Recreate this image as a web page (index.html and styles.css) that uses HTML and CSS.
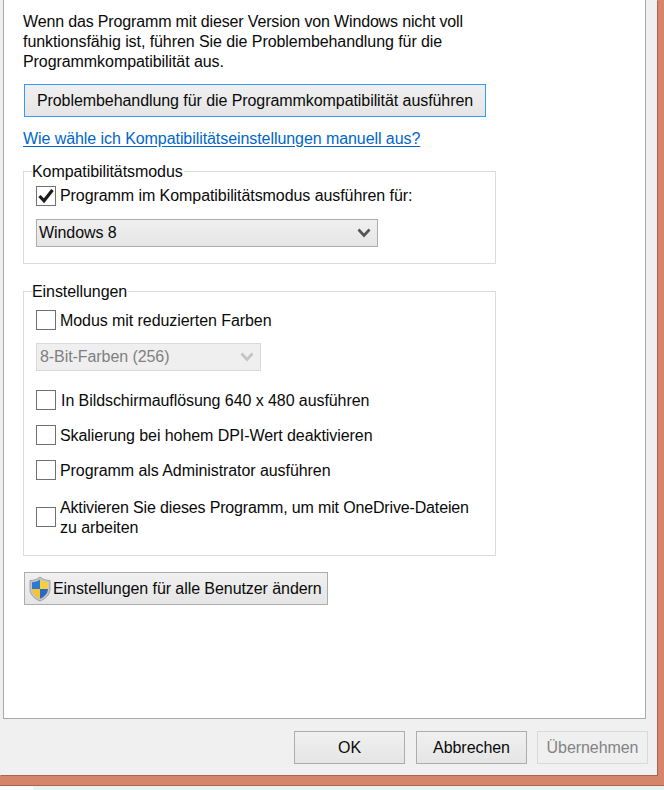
FILE: index.html
```html
<!DOCTYPE html>
<html lang="de">
<head>
<meta charset="utf-8">
<title>Kompatibilität</title>
<link rel="stylesheet" href="styles.css">
</head>
<body>
<div class="frame">
  <div class="dialog">
    <main class="panel">
      <p class="intro"><span class="tight">Wenn das Programm mit dieser Version von Windows nicht voll</span> funktionsfähig ist, führen Sie die Problembehandlung für die Programmkompatibilität aus.</p>
      <button class="btn btn-focus">Problembehandlung für die Programmkompatibilität ausführen</button>
      <a class="link" href="#">Wie wähle ich Kompatibilitätseinstellungen manuell aus?</a>

      <section class="group group-mode">
        <h2 class="legend">Kompatibilitätsmodus</h2>
        <div class="row row-mode">
          <span class="check">
            <svg class="tick" width="18" height="18" viewBox="0 0 18 18"><path d="M2.500 9 L7 13.800 L15.500 3" fill="none" stroke="#1a1a1a" stroke-width="3.200"/></svg>
          </span>
          <span>Programm im Kompatibilitätsmodus ausführen für:</span>
        </div>
        <div class="select select-mode">
          <span>Windows 8</span>
          <svg width="14" height="10" viewBox="0 0 14 10"><path d="M1.500 1.500 L7 7.500 L12.500 1.500" fill="none" stroke="#555" stroke-width="2.600"/></svg>
        </div>
      </section>

      <section class="group group-settings">
        <h2 class="legend">Einstellungen</h2>
        <div class="row row-colors"><span class="check"></span><span class="label">Modus mit reduzierten Farben</span></div>
        <div class="select select-off">
          <span>8-Bit-Farben (256)</span>
          <svg width="14" height="10" viewBox="0 0 14 10"><path d="M1.500 1.500 L7 7.500 L12.500 1.500" fill="none" stroke="#c4c4c4" stroke-width="2.600"/></svg>
        </div>
        <div class="row row-res"><span class="check"></span><span class="label label-res">In Bildschirmauflösung 640 x 480 ausführen</span></div>
        <div class="row row-next"><span class="check"></span><span class="label">Skalierung bei hohem DPI-Wert deaktivieren</span></div>
        <div class="row row-next"><span class="check"></span><span class="label">Programm als Administrator ausführen</span></div>
        <div class="row row-drive"><span class="check"></span><span class="label wrap"><span class="tight">Aktivieren Sie dieses Programm, um mit OneDrive-Dateien</span> zu arbeiten</span></div>
      </section>

      <button class="btn btn-shield">
        <svg width="24" height="26" viewBox="0 0 24 26">
          <path d="M12 1 C9 3.500 5.500 4.500 2 4.500 L2 13 C2 19 7 23 12 25 C17 23 22 19 22 13 L22 4.500 C18.500 4.500 15 3.500 12 1 Z" fill="#c3c6ca" stroke="#8f9499" stroke-width="0.800"/>
          <path d="M12 3.500 L12 13 L4 13 L4 6.300 C7 6.200 9.500 5.300 12 3.500 Z" fill="#2f78d6"/>
          <path d="M12 3.500 C14.500 5.300 17 6.200 20 6.300 L20 13 L12 13 Z" fill="#f7cf3c"/>
          <path d="M4 13 L12 13 L12 22.800 C8 21 4.300 18 4 13 Z" fill="#f5c52e"/>
          <path d="M12 13 L20 13 C19.700 18 16 21 12 22.800 Z" fill="#2a68c4"/>
        </svg>
        <span>Einstellungen für alle Benutzer ändern</span>
      </button>
    </main>
    <footer class="footer">
      <button class="btn btn-foot">OK</button>
      <button class="btn btn-foot btn-cancel">Abbrechen</button>
      <button class="btn btn-foot btn-off">Übernehmen</button>
    </footer>
  </div>
</div>
<div class="below"><span class="below-left"></span></div>
</body>
</html>
```
FILE: styles.css
```css
html, body {
  margin: 0;
  padding: 0;
}
body {
  width: 664px;
  height: 790px;
  overflow: hidden;
  background: #eef0ee;
  font-family: "Liberation Sans", Arial, sans-serif;
  font-size: 16px;
  line-height: 20px;
  letter-spacing: -0.07px;
  color: #0a0a0a;
}
.tight {
  letter-spacing: -0.15px;
}
.frame {
  height: 786px;
  box-sizing: border-box;
  background: #d4856a;
  border-bottom: 1px solid #a9654f;
}
.dialog {
  width: 657px;
  height: 775px;
  box-sizing: border-box;
  background: #f0f0f0;
  padding-left: 3px;
  box-shadow: 1px 1px 0 #a9654f;
  display: flex;
  flex-direction: column;
}
.panel {
  width: 643px;
  height: 719px;
  box-sizing: border-box;
  background: #fff;
  border: 1px solid #a9a9a9;
  border-top: 0;
  padding: 12px 0 0 19px;
}
.intro {
  margin: 0;
  width: 450px;
}
.btn {
  display: flex;
  align-items: center;
  justify-content: center;
  box-sizing: border-box;
  height: 33px;
  padding: 0;
  font: inherit;
  letter-spacing: inherit;
  color: inherit;
  border: 1px solid #acacac;
  background: linear-gradient(#f0f0f0, #e5e5e5);
}
.btn-focus {
  margin: 12px 0 0 1px;
  width: 462px;
  border-color: #3399ff;
}
.link {
  display: block;
  width: max-content;
  margin-top: 12px;
  color: #0066cc;
  text-decoration: underline;
  text-underline-offset: 2px;
}
.group {
  position: relative;
  box-sizing: border-box;
  width: 473px;
  border: 1px solid #dcdcdc;
  padding-left: 12px;
}
.group-mode {
  margin-top: 22px;
  height: 93px;
}
.group-settings {
  margin-top: 27px;
  height: 265px;
}
.legend {
  position: absolute;
  left: 8px;
  top: -10px;
  margin: 0;
  padding: 0 1px 0 0;
  font: inherit;
  background: #fff;
}
.row {
  display: flex;
  align-items: center;
  gap: 4px;
}
.label {
  margin: 1px 0 -1px;
}
.label-res {
  margin-left: 1px;
}
.check {
  flex: none;
  display: flex;
  align-items: center;
  justify-content: center;
  box-sizing: border-box;
  width: 20px;
  height: 20px;
  border: 1px solid #707070;
  background: #fff;
}
.row-mode { margin-top: 14px; }
.row-colors { margin-top: 18px; }
.row-res { margin-top: 19px; }
.row-next { margin-top: 15px; }
.row-drive { margin-top: 17px; }
.wrap { width: 425px; }
.select {
  display: flex;
  align-items: center;
  justify-content: space-between;
  box-sizing: border-box;
  height: 28px;
  padding: 0 6px 0 2px;
  border: 1px solid #acacac;
}
.select-mode {
  margin-top: 13px;
  width: 342px;
  background: linear-gradient(#f0f0f0, #e5e5e5);
}
.select-off {
  margin-top: 13px;
  width: 225px;
  padding-left: 3px;
  color: #7f7f7f;
  background: #efefef;
  border-color: #d9d9d9;
}
.btn-shield {
  margin: 16px 0 0 1px;
  width: 304px;
  justify-content: flex-start;
  gap: 0;
  padding-left: 3px;
}
.btn-shield svg {
  flex: none;
  margin-right: 1px;
}
.footer {
  display: flex;
  justify-content: flex-end;
  gap: 11px;
  padding: 12px 9px 0 0;
}
.btn-foot {
  width: 111px;
}
.btn-off {
  margin-left: -1px;
  color: #838383;
  background: #efefef;
  border-color: #d9d9d9;
}
.below {
  height: 4px;
}
.below-left {
  display: block;
  width: 33px;
  height: 4px;
  background: #fcfdfc;
}
```
